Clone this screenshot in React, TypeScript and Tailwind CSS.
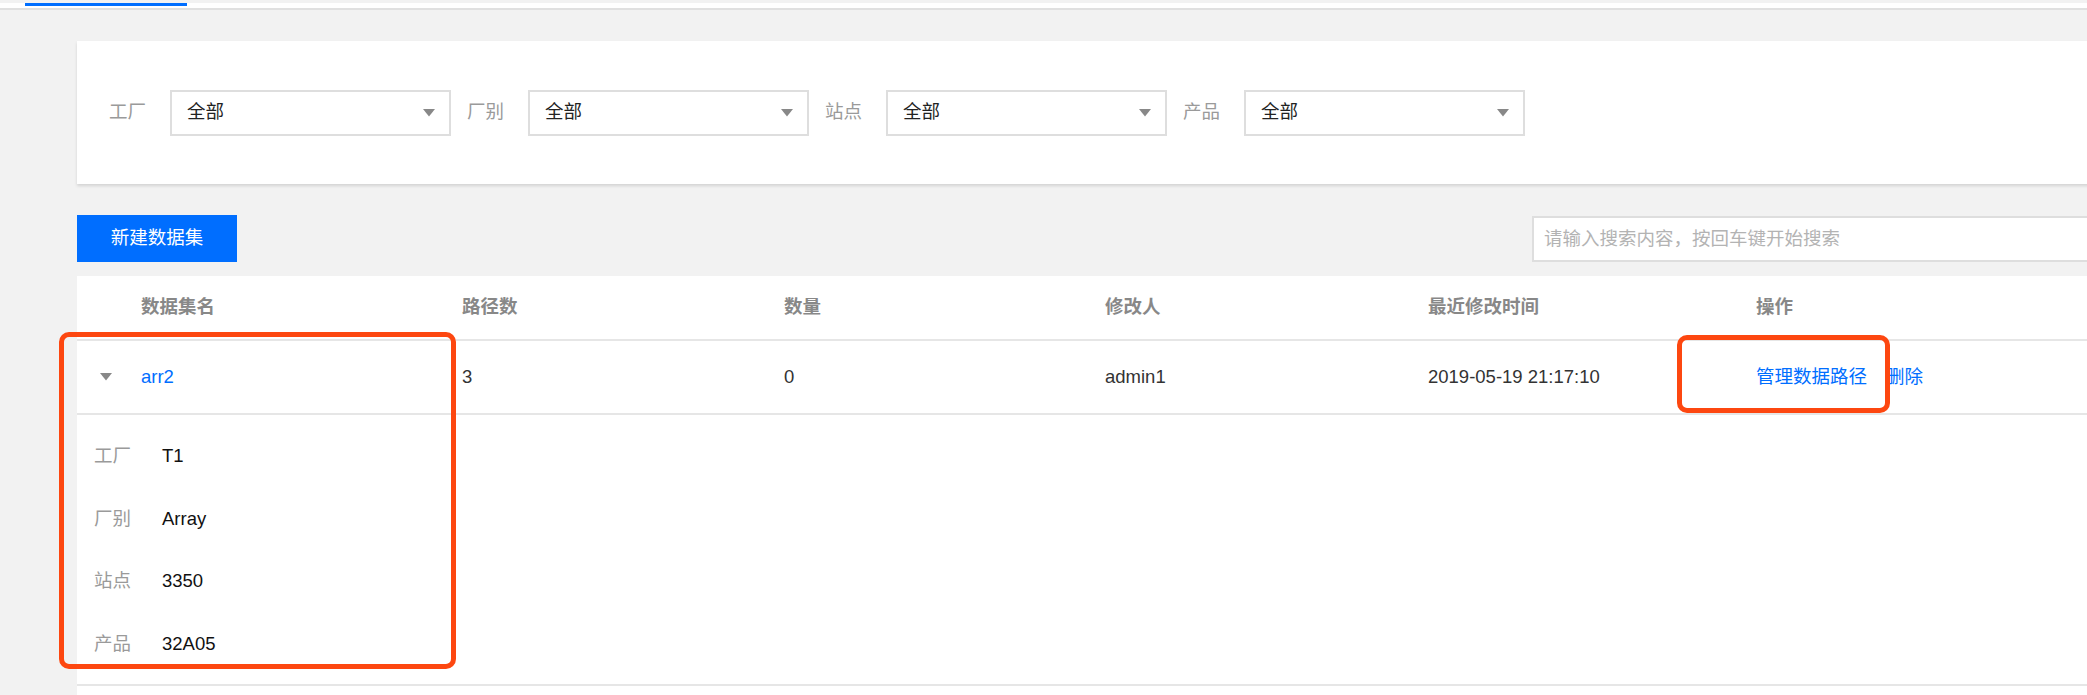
import React from "react";

const FONT = { fontFamily: '"Liberation Sans", "Noto Sans CJK SC", sans-serif' };

function Caret({ className = "" }: { className?: string }) {
  return (
    <svg width="12" height="8" viewBox="0 0 12 8" className={className}>
      <path d="M0 0 L12 0 L6 7.5 Z" fill="#888888" />
    </svg>
  );
}

function FilterItem({ label }: { label: string }) {
  return (
    <div className="flex items-center">
      <span className="w-[36px] mr-[25px] text-[#9a9a9a] whitespace-nowrap">{label}</span>
      <div className="w-[281px] h-[46px] mr-[16px] border-2 border-[#dedede] bg-white flex items-center justify-between pl-[15px] pr-[14px]">
        <span className="text-[#222]">全部</span>
        <Caret />
      </div>
    </div>
  );
}

const cols = "grid grid-cols-[64px_321px_322px_321px_323px_328px_1fr]";

export default function App() {
  return (
    <div
      className="relative w-[2087px] h-[695px] overflow-hidden bg-[#f2f2f2] text-[18.5px] leading-none"
      style={FONT}
    >
      {/* tab bar */}
      <div className="h-[7px] bg-white border-b-2 border-[#e0e0e0]">
        <div className="ml-[25px] mt-[3px] w-[162px] h-[3px] bg-[#006eff]" />
      </div>

      <div className="ml-[77px] w-[2040px]">
        {/* filter card */}
        <div className="mt-[31px] h-[143px] bg-white shadow-[0_2px_3px_rgba(0,0,0,0.13)] flex items-center pl-[32px]">
          <FilterItem label="工厂" />
          <FilterItem label="厂别" />
          <FilterItem label="站点" />
          <FilterItem label="产品" />
        </div>

        {/* toolbar */}
        <div className="mt-[31px] flex justify-between items-start">
          <button className="w-[160px] h-[47px] bg-[#006eff] text-white flex items-center justify-center">
            新建数据集
          </button>
          <input
            className="w-[585px] h-[46px] mt-[1px] border-2 border-[#dedede] bg-white pl-[10px] outline-none text-[18.5px] placeholder:text-[#b3b3b3]"
            style={FONT}
            placeholder="请输入搜索内容，按回车键开始搜索"
            readOnly
          />
        </div>

        {/* table */}
        <div className="mt-[14px] bg-white h-[500px]">
          <div className={`${cols} h-[65px] items-center border-b-2 border-[#e6e6e6] text-[#888] font-semibold`}>
            <div />
            <div>数据集名</div>
            <div>路径数</div>
            <div>数量</div>
            <div>修改人</div>
            <div>最近修改时间</div>
            <div>操作</div>
          </div>
          <div className={`${cols} h-[74px] items-center border-b-2 border-[#e6e6e6] text-[#333]`}>
            <div className="pl-[23px] flex items-center">
              <Caret />
            </div>
            <div className="text-[#006eff]">arr2</div>
            <div>3</div>
            <div>0</div>
            <div>admin1</div>
            <div>2019-05-19 21:17:10</div>
            <div className="flex gap-[19px] text-[#006eff] whitespace-nowrap">
              <span>管理数据路径</span>
              <span>删除</span>
            </div>
          </div>
          <div className="h-[271px] border-b-2 border-[#e6e6e6] pt-[10px] pl-[17px]">
            {[
              ["工厂", "T1"],
              ["厂别", "Array"],
              ["站点", "3350"],
              ["产品", "32A05"],
            ].map(([k, v]) => (
              <div key={k} className="h-[62.5px] flex items-center">
                <span className="w-[68px] text-[#9a9a9a]">{k}</span>
                <span className="text-[#111]">{v}</span>
              </div>
            ))}
          </div>
        </div>
      </div>

      {/* annotation boxes */}
      <div className="absolute left-[59px] top-[332px] w-[397px] h-[337px] border-[5px] border-[#fd4710] rounded-[10px]" />
      <div className="absolute left-[1677px] top-[335px] w-[213px] h-[78px] border-[5px] border-[#fd4710] rounded-[10px]" />
    </div>
  );
}
